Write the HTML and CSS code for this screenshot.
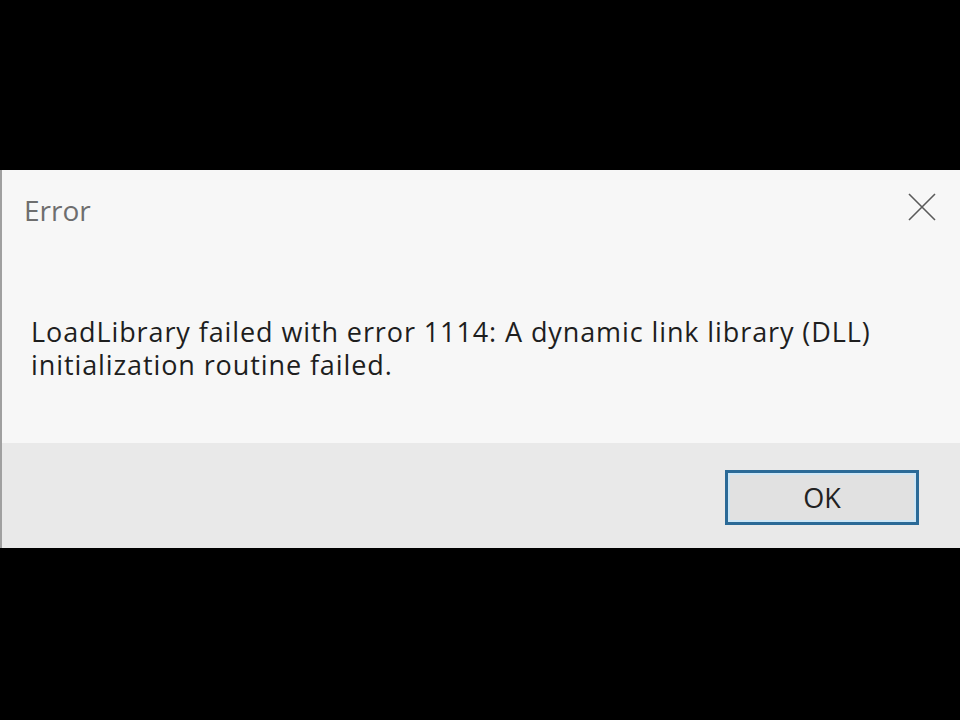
FILE: index.html
```html
<!DOCTYPE html>
<html lang="en">
<head>
<meta charset="utf-8">
<title>Error</title>
<link rel="stylesheet" href="styles.css">
</head>
<body>
<div class="dialog">
  <div class="titlebar">
    <span class="title">Error</span>
    <svg class="close" width="28" height="28" viewBox="0 0 28 28" aria-hidden="true">
      <path d="M1 1 L27 27 M27 1 L1 27" stroke="#5a5a5a" stroke-width="1.6" fill="none"/>
    </svg>
  </div>
  <p class="message">LoadLibrary failed with error 1114: A dynamic link library (DLL) initialization routine failed.</p>
  <div class="footer">
    <button class="ok">OK</button>
  </div>
</div>
</body>
</html>
```

FILE: styles.css
```css
html, body {
  margin: 0;
  padding: 0;
  background: #000;
}
body {
  height: 720px;
  padding-top: 170px;
  box-sizing: border-box;
  font-family: "Open Sans", "Noto Sans", sans-serif;
}
.dialog {
  height: 378px;
  background: #f7f7f7;
  border-left: 2px solid #a0a0a0;
  display: flex;
  flex-direction: column;
  box-sizing: border-box;
}
.titlebar {
  display: flex;
  justify-content: space-between;
  align-items: flex-start;
  padding: 23px 24px 0 22px;
}
.title {
  font-size: 28px;
  line-height: 34px;
  color: #6e6e6e;
}
.close {
  display: block;
}
.message {
  margin: 88px 0 0 29px;
  font-size: 27px;
  line-height: 33px;
  letter-spacing: 0.9px;
  color: #1e1e1e;
  width: 900px;
}
.footer {
  margin-top: auto;
  height: 105px;
  background: #e9e9e9;
  display: flex;
  justify-content: flex-end;
  align-items: flex-start;
  padding: 27px 41px 0 0;
  box-sizing: border-box;
}
.ok {
  width: 194px;
  height: 55px;
  border: 3px solid #2b6a97;
  box-shadow: inset 0 0 0 2px #cde6f6;
  background: #e1e1e1;
  font-family: "Open Sans", "Noto Sans", sans-serif;
  font-size: 27px;
  line-height: 30px;
  color: #222;
  padding: 0;
}
```
